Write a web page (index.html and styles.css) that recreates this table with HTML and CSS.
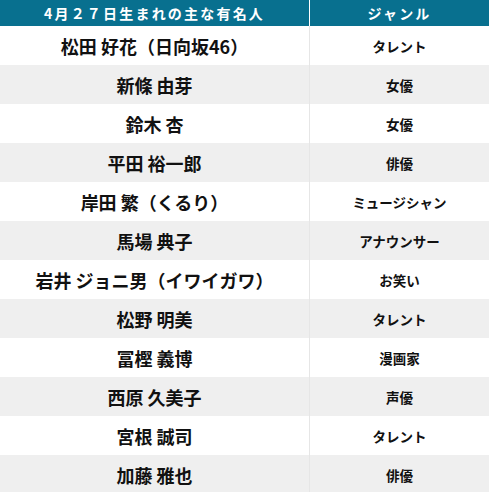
FILE: index.html
```html
<!DOCTYPE html>
<html lang="ja">
<head>
<meta charset="utf-8">
<link rel="stylesheet" href="styles.css">
</head>
<body>
<table class="tbl">
  <thead>
    <tr><th class="c-name">4月２７日生まれの主な有名人</th><th class="c-genre">ジャンル</th></tr>
  </thead>
  <tbody>
    <tr><td class="name">松田 好花（日向坂46）</td><td class="genre">タレント</td></tr>
    <tr><td class="name">新條 由芽</td><td class="genre">女優</td></tr>
    <tr><td class="name">鈴木 杏</td><td class="genre">女優</td></tr>
    <tr><td class="name">平田 裕一郎</td><td class="genre">俳優</td></tr>
    <tr><td class="name">岸田 繁（くるり）</td><td class="genre">ミュージシャン</td></tr>
    <tr><td class="name">馬場 典子</td><td class="genre">アナウンサー</td></tr>
    <tr><td class="name">岩井 ジョニ男（イワイガワ）</td><td class="genre">お笑い</td></tr>
    <tr><td class="name">松野 明美</td><td class="genre">タレント</td></tr>
    <tr><td class="name">冨樫 義博</td><td class="genre">漫画家</td></tr>
    <tr><td class="name">西原 久美子</td><td class="genre">声優</td></tr>
    <tr><td class="name">宮根 誠司</td><td class="genre">タレント</td></tr>
    <tr><td class="name">加藤 雅也</td><td class="genre">俳優</td></tr>
  </tbody>
</table>
</body>
</html>
```
FILE: styles.css
```css
html, body {
  margin: 0;
  padding: 0;
  background: #fff;
}
.tbl {
  width: 489px;
  border-collapse: collapse;
  font-family: "Noto Sans CJK JP", "Noto Sans", sans-serif;
  color: #111;
}
.tbl th {
  background: #08708f;
  color: #fff;
  font-weight: 700;
  font-size: 14px;
  letter-spacing: 2.2px;
  height: 26px;
  padding: 0;
  line-height: 26px;
  text-align: center;
}
.c-name {
  width: 309px;
  border-right: 1px solid #fff;
}
.tbl td {
  height: 39px;
  padding: 0;
  text-align: center;
  font-weight: 700;
}
.tbl tbody tr:nth-child(even) td {
  background: #efefef;
}
.name {
  font-size: 18px;
  border-right: 1px solid #e6e6e6;
}
.genre {
  font-size: 13.5px;
}
```
